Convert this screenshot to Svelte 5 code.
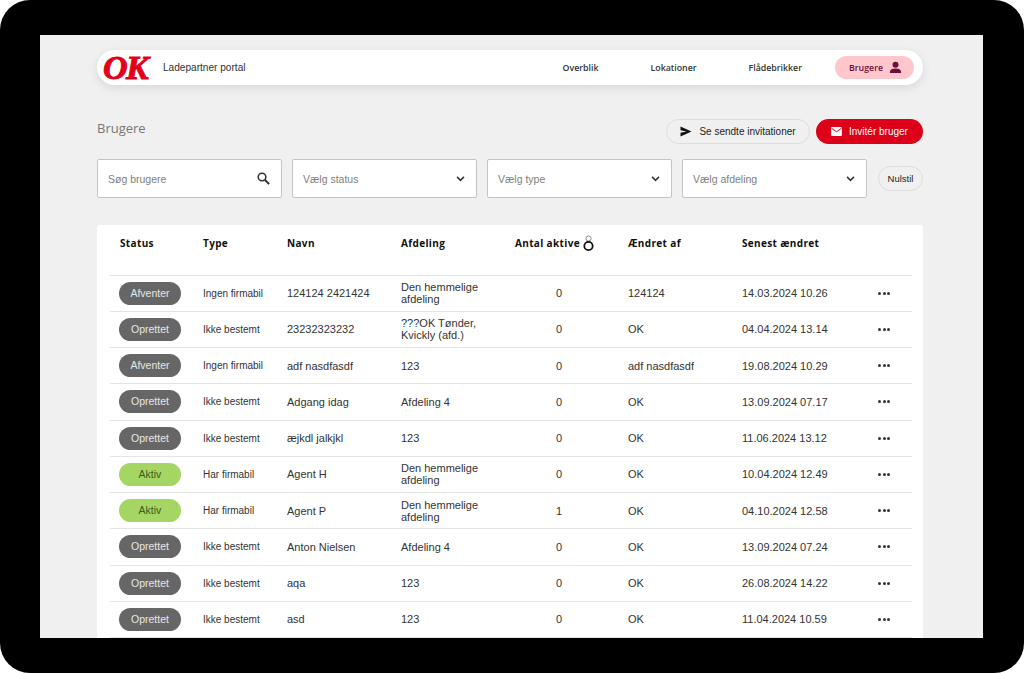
<script>
  const rows = [
    { status: 'Afventer', type: 'Ingen firmabil', name: '124124 2421424', dept: 'Den hemmelige afdeling', active: 0, by: '124124', at: '14.03.2024 10.26' },
    { status: 'Oprettet', type: 'Ikke bestemt', name: '23232323232', dept: '???OK Tønder, Kvickly (afd.)', active: 0, by: 'OK', at: '04.04.2024 13.14' },
    { status: 'Afventer', type: 'Ingen firmabil', name: 'adf nasdfasdf', dept: '123', active: 0, by: 'adf nasdfasdf', at: '19.08.2024 10.29' },
    { status: 'Oprettet', type: 'Ikke bestemt', name: 'Adgang idag', dept: 'Afdeling 4', active: 0, by: 'OK', at: '13.09.2024 07.17' },
    { status: 'Oprettet', type: 'Ikke bestemt', name: 'æjkdl jalkjkl', dept: '123', active: 0, by: 'OK', at: '11.06.2024 13.12' },
    { status: 'Aktiv', type: 'Har firmabil', name: 'Agent H', dept: 'Den hemmelige afdeling', active: 0, by: 'OK', at: '10.04.2024 12.49' },
    { status: 'Aktiv', type: 'Har firmabil', name: 'Agent P', dept: 'Den hemmelige afdeling', active: 1, by: 'OK', at: '04.10.2024 12.58' },
    { status: 'Oprettet', type: 'Ikke bestemt', name: 'Anton Nielsen', dept: 'Afdeling 4', active: 0, by: 'OK', at: '13.09.2024 07.24' },
    { status: 'Oprettet', type: 'Ikke bestemt', name: 'aqa', dept: '123', active: 0, by: 'OK', at: '26.08.2024 14.22' },
    { status: 'Oprettet', type: 'Ikke bestemt', name: 'asd', dept: '123', active: 0, by: 'OK', at: '11.04.2024 10.59' }
  ];
  const selects = ['Vælg status', 'Vælg type', 'Vælg afdeling'];
</script>

<div class="frame">
  <div class="screen">
    <header class="topbar">
      <span class="logo">OK</span>
      <span class="portal">Ladepartner portal</span>
      <nav>
        <a class="n1" href="#a">Overblik</a>
        <a class="n2" href="#a">Lokationer</a>
        <a class="n3" href="#a">Flådebrikker</a>
        <a class="active" href="#a">
          Brugere
          <svg width="13" height="13" viewBox="0 0 14 14"><circle cx="7" cy="4" r="3.2" fill="#6d0f38" /><path d="M1 13v-1.5C1 9.3 3.5 8 7 8s6 1.3 6 3.5V13z" fill="#6d0f38" /></svg>
        </a>
      </nav>
    </header>

    <div class="titlerow">
      <h1>Brugere</h1>
      <div class="actions">
        <button class="outline">
          <svg width="12" height="11" viewBox="0 0 13 12"><path d="M0.5 0.5 12.5 6 0.5 11.5 0.5 7.3 7 6 0.5 4.7z" fill="#111" /></svg>
          Se sendte invitationer
        </button>
        <button class="red">
          <svg width="11" height="9" viewBox="0 0 12 10"><rect width="12" height="10" rx="1" fill="#fff" /><path d="M0.5 1.5 6 5.2 11.5 1.5" fill="none" stroke="#dc0018" stroke-width="1.1" /></svg>
          Invitér bruger
        </button>
      </div>
    </div>

    <div class="filters">
      <div class="field">
        <span>Søg brugere</span>
        <svg width="13" height="13" viewBox="0 0 15 15"><circle cx="5.8" cy="5.8" r="4.4" fill="none" stroke="#333" stroke-width="1.8" /><path d="M9 9l5 5" stroke="#333" stroke-width="2.4" /></svg>
      </div>
      {#each selects as label}
        <div class="field">
          <span>{label}</span>
          <svg width="9" height="6" viewBox="0 0 10 7"><path d="M1 1l4 4 4-4" fill="none" stroke="#333" stroke-width="1.8" /></svg>
        </div>
      {/each}
      <button class="reset">Nulstil</button>
    </div>

    <section class="card">
      <div class="row head">
        <div class="first">Status</div>
        <div>Type</div>
        <div>Navn</div>
        <div>Afdeling</div>
        <div class="antal">
          Antal aktive
          <svg width="11" height="17" viewBox="0 0 11 17"><circle cx="5.5" cy="3.5" r="2.6" fill="none" stroke="#888" stroke-width="1" /><circle cx="5.5" cy="11" r="4.2" fill="none" stroke="#111" stroke-width="1.8" /></svg>
        </div>
        <div>Ændret af</div>
        <div>Senest ændret</div>
        <div></div>
      </div>
      {#each rows as r}
        <div class="row">
          <div class="first">
            <span class="pill" class:green={r.status === 'Aktiv'}>{r.status}</span>
          </div>
          <div class="type">{r.type}</div>
          <div>{r.name}</div>
          <div class="dept">{r.dept}</div>
          <div class="count">{r.active}</div>
          <div>{r.by}</div>
          <div>{r.at}</div>
          <div class="dots"><i></i><i></i><i></i></div>
        </div>
      {/each}
    </section>
  </div>
</div>

<style>
  :global(body) {
    margin: 0;
    background: #fff;
  }
  .frame {
    width: 1024px;
    height: 673px;
    box-sizing: border-box;
    padding: 35px 41px 35px 40px;
    background: #000;
    border-radius: 30px;
    overflow: hidden;
  }
  .screen {
    height: 603px;
    box-sizing: border-box;
    padding: 15px 60px 0 57px;
    background: #f0f0f0;
    overflow: hidden;
    font-family: "Liberation Sans", Arial, sans-serif;
    color: #333;
  }

  .topbar {
    display: flex;
    align-items: center;
    height: 35px;
    padding: 0 9px 0 6px;
    background: #fff;
    border-radius: 18px;
    box-shadow: 0 3px 10px rgba(0, 0, 0, 0.1);
  }
  .logo {
    width: 60px;
    font-family: "Liberation Serif", serif;
    font-style: italic;
    font-weight: 700;
    font-size: 34px;
    line-height: 35px;
    letter-spacing: -1.5px;
    color: #e2001a;
    -webkit-text-stroke: 1px #e2001a;
  }
  .portal {
    font-size: 10.1px;
    color: #333;
  }
  nav {
    display: flex;
    align-items: center;
    margin-left: auto;
    font-family: "Open Sans", sans-serif;
    font-size: 8.8px;
    font-weight: 600;
  }
  nav a {
    color: #333;
    text-decoration: none;
  }
  .n1 { margin-right: 52px; }
  .n2 { margin-right: 52px; }
  .n3 { margin-right: 33px; }
  nav .active {
    display: flex;
    align-items: center;
    gap: 6px;
    height: 23px;
    padding: 0 12px 0 14px;
    border-radius: 12px;
    background: #ffc7cc;
    color: #6d0f38;
  }

  .titlerow {
    display: flex;
    justify-content: space-between;
    align-items: flex-start;
    height: 74px;
    padding-top: 34px;
    box-sizing: border-box;
  }
  h1 {
    margin: 0;
    font-family: "Open Sans", sans-serif;
    font-size: 13px;
    font-weight: 400;
    line-height: 18px;
    color: #777;
  }
  .actions {
    display: flex;
    gap: 6px;
  }
  button {
    font-family: "Liberation Sans", Arial, sans-serif;
    cursor: pointer;
  }
  .actions button {
    display: flex;
    align-items: center;
    justify-content: center;
    height: 25px;
    margin: 0;
    font-size: 10px;
    line-height: 23px;
    border-radius: 13px;
    padding: 0;
  }
  .outline {
    gap: 7px;
    width: 144px;
    background: #f0f0f0;
    border: 1px solid #ddd;
    color: #222;
  }
  .red {
    gap: 7px;
    width: 107px;
    background: #dc0018;
    border: 0;
    color: #fff;
  }

  .filters {
    display: flex;
    align-items: center;
    gap: 10px;
    height: 39px;
  }
  .field {
    display: flex;
    align-items: center;
    justify-content: space-between;
    width: 185px;
    height: 39px;
    box-sizing: border-box;
    padding: 0 11px 0 10px;
    background: #fff;
    border: 1px solid #c4c4c4;
    border-radius: 2px;
    font-size: 10.5px;
    color: #808080;
  }
  .reset {
    height: 25px;
    width: 45px;
    margin-left: 1px;
    padding: 0;
    background: #f0f0f0;
    border: 1px solid #ddd;
    border-radius: 13px;
    font-size: 9.5px;
    color: #222;
  }

  .card {
    margin-top: 27px;
    padding: 0 11px 0 13px;
    height: 420px;
    background: #fff;
    border-radius: 3px;
  }
  .row {
    display: grid;
    grid-template-columns: 93px 84px 114px 114px 113px 114px 130px 24px;
    align-items: center;
    height: 36.25px;
    border-bottom: 1.5px solid #e4e4e4;
    box-sizing: border-box;
    font-size: 11px;
    color: #333;
  }
  .head {
    height: 50.5px;
    align-items: start;
    padding-top: 11px;
    font-family: "Open Sans", sans-serif;
    font-size: 10px;
    font-weight: 700;
    letter-spacing: 0.35px;
    color: #111;
  }
  .first {
    padding-left: 9px;
  }
  .head .first {
    padding-left: 10px;
  }
  .antal {
    display: flex;
    align-items: center;
    gap: 3px;
    height: 14px;
  }
  .pill {
    display: block;
    width: 62px;
    height: 23px;
    border-radius: 12px;
    background: #666;
    color: #e6e6e6;
    font-size: 10.5px;
    line-height: 23px;
    text-align: center;
  }
  .pill.green {
    background: #a5d562;
    color: #3d5a1a;
  }
  .type {
    font-size: 10px;
  }
  .dept {
    line-height: 12px;
    padding-right: 20px;
  }
  .count {
    padding-left: 41px;
  }
  .dots {
    display: flex;
    justify-content: center;
    gap: 1.2px;
  }
  .dots i {
    width: 3px;
    height: 3px;
    border-radius: 50%;
    background: #333;
  }
</style>
